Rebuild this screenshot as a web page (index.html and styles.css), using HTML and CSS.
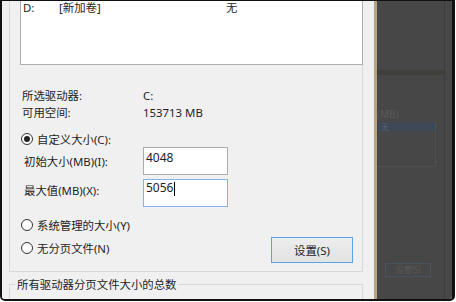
FILE: index.html
```html
<!DOCTYPE html>
<html lang="zh-CN">
<head>
<meta charset="utf-8">
<title>虚拟内存</title>
<link rel="stylesheet" href="styles.css">
</head>
<body>
<div class="screen">
  <div class="dialog">
    <div class="group group-top">
      <div class="listbox">
        <div class="list-row"><span class="c1">D:</span><span class="c2">[新加卷]</span><span class="c3">无</span></div>
      </div>
      <div class="info">
        <div class="info-row"><span class="info-label">所选驱动器:</span><span>C:</span></div>
        <div class="info-row"><span class="info-label">可用空间:</span><span>153713 MB</span></div>
      </div>
      <div class="radio-row first"><span class="radio checked"></span><span>自定义大小(C):</span></div>
      <div class="size-row"><span class="size-label">初始大小(MB)(I):</span><div class="textbox">4048</div></div>
      <div class="size-row second"><span class="size-label">最大值(MB)(X):</span><div class="textbox focused">5056<span class="caret"></span></div></div>
      <div class="radio-row system"><span class="radio"></span><span>系统管理的大小(Y)</span></div>
      <div class="last-row">
        <div class="radio-row"><span class="radio"></span><span>无分页文件(N)</span></div>
        <button class="btn">设置(S)</button>
      </div>
    </div>
    <div class="group group-total"><span class="legend">所有驱动器分页文件大小的总数</span></div>
  </div>
  <div class="backdrop">
    <div class="ghost">
      <div class="ghost-band"></div>
      <div class="ghost-label">(MB)</div>
      <div class="ghost-list"><div class="ghost-sel">无</div></div>
      <div class="ghost-btn">设置(S)</div>
    </div>
  </div>
</div>
</body>
</html>
```
FILE: styles.css
```css
html, body {
  margin: 0;
  background: #fff;
}
body {
  font-family: "Noto Sans", "Noto Sans CJK SC", sans-serif;
  font-size: 11.4px;
  color: #1e1e1e;
}
.screen {
  width: 455px;
  height: 301px;
  box-sizing: border-box;
  border: solid #111;
  border-width: 1px 3px 2px 2px;
  border-radius: 0 0 5px 5px;
  display: flex;
  overflow: hidden;
}
.dialog {
  width: 372px;
  flex: none;
  background: #f0f0f0;
  overflow: hidden;
}
.group-top {
  margin-left: 7px;
  width: 354px;
  box-sizing: border-box;
  border: 1px solid #d9d9d9;
  border-top: none;
  padding: 0 0 8px 10px;
}
.listbox {
  height: 64px;
  box-sizing: border-box;
  background: #fff;
  border: 1px solid #adadad;
  border-top: none;
  margin-right: -1px;
}
.list-row {
  display: flex;
  padding-left: 2px;
  line-height: 14px;
}
.c1 { width: 36px; }
.c2 { width: 167px; }
.info {
  margin-top: 22px;
  padding-left: 2px;
}
.info-row {
  display: flex;
  line-height: 17px;
}
.info-label { width: 121px; }
.radio-row {
  display: flex;
  align-items: center;
  height: 16px;
  margin-left: 1px;
}
.radio-row.first { margin-top: 10px; }
.radio-row.system { margin-top: 10px; }
.radio {
  width: 12px;
  height: 12px;
  box-sizing: border-box;
  border: 1px solid #333;
  border-radius: 50%;
  background: #fff;
  margin-right: 4px;
  display: flex;
  align-items: center;
  justify-content: center;
}
.radio.checked::after {
  content: "";
  width: 6px;
  height: 6px;
  border-radius: 50%;
  background: #222;
}
.size-row {
  display: flex;
  align-items: center;
  padding-left: 4px;
  height: 28px;
}
.size-row.second { margin-top: 4px; }
.size-row.second .size-label { padding-bottom: 6px; }
.size-label { width: 119px; }
.textbox {
  width: 85px;
  height: 28px;
  box-sizing: border-box;
  border: 1px solid #adadad;
  background: #fff;
  padding: 2px 0 0 2px;
  font-size: 12px;
  line-height: 16px;
  color: #222;
}
.textbox.focused {
  border-color: #7eb4ea;
  padding-top: 0;
}
.caret {
  display: inline-block;
  width: 1px;
  height: 14px;
  background: #000;
  vertical-align: middle;
  margin-left: 1px;
}
.last-row {
  display: flex;
  align-items: center;
  margin-top: 4px;
  height: 26px;
}
.last-row .radio-row { padding-bottom: 4px; }
.btn {
  margin-left: auto;
  margin-right: 9px;
  width: 82px;
  height: 26px;
  padding: 0;
  border: 1px solid #5aa2ea;
  background: linear-gradient(#ededed, #e3e3e3);
  font: inherit;
  color: #1e1e1e;
}
.group-total {
  margin: 12px 0 0 7px;
  width: 354px;
  height: 30px;
  box-sizing: border-box;
  border: 1px solid #d9d9d9;
  border-bottom: none;
  display: flex;
  align-items: flex-start;
}
.legend {
  margin: -8.5px 0 0 5px;
  padding: 0 2px;
  background: #f0f0f0;
  line-height: 16px;
}
.backdrop {
  flex: 1;
  background: #474747;
  border-left: 3px solid #b5a47f;
  display: flex;
}
.ghost {
  width: 67px;
  border-right: 1px solid #3d3d3d;
}
.ghost-band {
  margin-top: 69px;
  height: 5px;
  background: #403f3c;
}
.ghost-label {
  margin-top: 33px;
  font-size: 10px;
  line-height: 12px;
  color: #5a5a5a;
}
.ghost-list {
  margin-top: 2px;
  width: 59px;
  height: 45px;
  box-sizing: border-box;
  border: 1px solid #505050;
  border-width: 0 1px 1px 0;
}
.ghost-sel {
  height: 9px;
  background: #3e4857;
  font-size: 8px;
  line-height: 9px;
  color: #56606e;
  padding-left: 4px;
}
.ghost-btn {
  margin: 96px 0 0 8px;
  width: 46px;
  height: 14px;
  box-sizing: border-box;
  border: 1px solid #4b5262;
  font-size: 8px;
  line-height: 12px;
  text-align: center;
  color: #595959;
}
```
